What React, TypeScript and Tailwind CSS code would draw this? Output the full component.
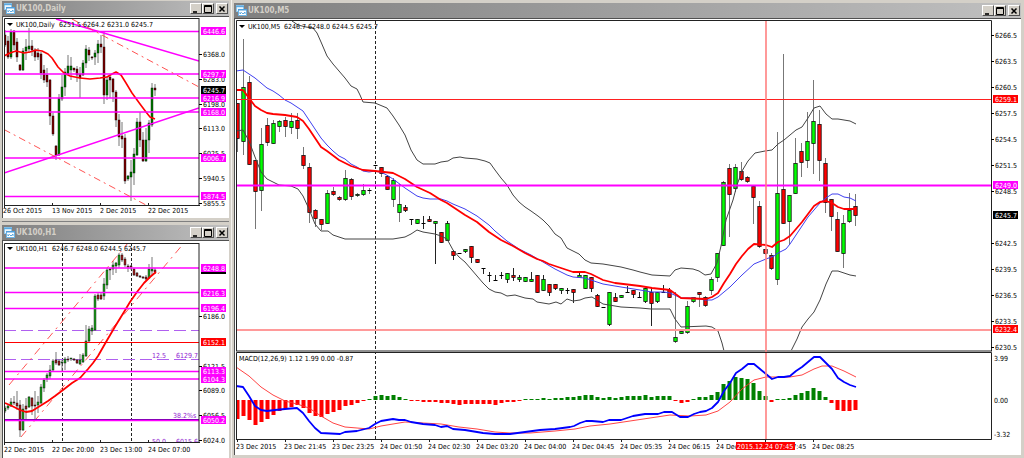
import type { ReactNode } from 'react';

// [high, body top, body bottom, low, direction], all in chart units. 'd' is a doji.
type Bar = [number, number, number, number, 'u' | 'r' | 'd'];
type Point = [number, number];
type Tone = 'plain' | 'magenta' | 'red' | 'black';

const M5_BARS: Bar[] = [
  [103, 103, 138, 151, 'r'], [39, 87, 141, 154, 'u'], [76, 82, 164, 164, 'r'], [160, 160, 191, 228, 'r'],
  [128, 144, 190, 210, 'u'], [118, 125, 142, 145, 'r'], [120, 123, 143, 143, 'u'], [120, 121, 126, 131, 'u'],
  [117, 120, 126, 136, 'r'], [113, 121, 127, 133, 'u'], [113, 120, 128, 138, 'r'], [147, 155, 165, 168, 'r'],
  [163, 167, 212, 222, 'r'], [209, 210, 218, 226, 'r'], [219, 219, 224, 229, 'r'], [190, 193, 223, 223, 'u'],
  [187, 191, 194, 195, 'r'], [196, 197, 199, 200, 'r'], [170, 178, 199, 200, 'u'], [178, 179, 196, 199, 'r'],
  [193, 194, 195, 196, 'u'], [184, 190, 194, 195, 'u'], [188, 190, 190, 193, 'd'], [165, 165, 165, 166, 'd'],
  [167, 167, 173, 176, 'r'], [175, 176, 189, 189, 'r'], [178, 180, 199, 206, 'u'], [184, 204, 212, 221, 'u'],
  [205, 207, 210, 211, 'r'], [219, 219, 219, 224, 'd'], [219, 219, 223, 223, 'u'], [216, 223, 223, 228, 'd'],
  [216, 219, 221, 221, 'r'], [221, 221, 223, 263, 'u'], [232, 232, 242, 242, 'r'], [221, 223, 240, 240, 'u'],
  [250, 251, 255, 259, 'r'], [253, 253, 253, 253, 'd'], [249, 249, 251, 252, 'u'], [246, 246, 257, 262, 'r'],
  [259, 259, 262, 262, 'r'], [268, 268, 268, 273, 'd'], [272, 275, 275, 281, 'd'], [275, 280, 280, 280, 'd'],
  [272, 275, 275, 278, 'd'], [273, 273, 279, 282, 'u'], [268, 275, 277, 280, 'r'], [275, 277, 279, 281, 'u'],
  [277, 277, 281, 281, 'u'], [272, 279, 281, 281, 'u'], [275, 275, 292, 292, 'r'], [275, 279, 290, 290, 'u'],
  [284, 284, 292, 295, 'r'], [284, 284, 288, 289, 'r'], [288, 288, 290, 293, 'u'], [288, 290, 290, 293, 'd'],
  [289, 289, 292, 302, 'r'], [272, 275, 277, 277, 'u'], [275, 275, 288, 288, 'u'], [277, 277, 288, 291, 'r'],
  [294, 295, 306, 306, 'r'], [307, 307, 307, 307, 'd'], [292, 292, 324, 325, 'u'], [293, 297, 301, 301, 'r'],
  [295, 295, 297, 297, 'u'], [286, 292, 292, 292, 'd'], [290, 290, 294, 297, 'r'], [292, 297, 297, 297, 'd'],
  [288, 288, 301, 302, 'u'], [287, 292, 303, 325, 'r'], [292, 292, 301, 302, 'u'], [285, 292, 292, 292, 'd'],
  [288, 290, 297, 297, 'r'], [292, 337, 341, 342, 'u'], [331, 331, 333, 333, 'u'], [301, 306, 332, 333, 'u'],
  [297, 297, 301, 302, 'u'], [292, 292, 294, 306, 'r'], [296, 297, 305, 306, 'r'], [277, 279, 290, 294, 'u'],
  [253, 253, 277, 281, 'u'], [181, 182, 245, 245, 'u'], [164, 168, 194, 236, 'r'], [164, 167, 188, 191, 'u'],
  [162, 171, 179, 180, 'r'], [176, 177, 181, 182, 'r'], [186, 186, 197, 223, 'r'], [201, 206, 246, 247, 'r'],
  [249, 249, 253, 254, 'r'], [253, 255, 268, 269, 'r'], [132, 193, 279, 284, 'u'], [54, 189, 223, 223, 'r'],
  [195, 195, 221, 244, 'u'], [138, 163, 193, 193, 'u'], [143, 151, 162, 176, 'r'], [112, 141, 160, 167, 'u'],
  [80, 121, 143, 173, 'u'], [110, 124, 160, 180, 'r'], [158, 163, 202, 212, 'r'], [199, 199, 216, 230, 'r'],
  [212, 219, 251, 251, 'r'], [215, 223, 253, 267, 'u'], [193, 210, 221, 222, 'u'], [194, 206, 215, 225, 'r'],
];

const DAILY_BARS: Bar[] = [
  [30, 35, 45, 47, 'r'], [36, 41, 57, 59, 'r'], [29, 32, 57, 59, 'u'], [30, 31, 45, 50, 'r'], [38, 42, 57, 62, 'r'],
  [64, 65, 70, 71, 'r'], [48, 51, 70, 71, 'u'], [39, 47, 51, 60, 'u'], [28, 46, 49, 53, 'u'], [40, 46, 50, 56, 'r'],
  [48, 50, 57, 61, 'r'], [48, 53, 57, 60, 'r'], [52, 54, 73, 79, 'r'], [65, 70, 80, 83, 'r'], [68, 75, 82, 87, 'r'],
  [79, 80, 116, 125, 'r'], [113, 116, 134, 136, 'r'], [145, 146, 155, 160, 'r'], [94, 98, 155, 156, 'u'],
  [75, 87, 99, 101, 'u'], [68, 72, 87, 96, 'u'], [55, 66, 74, 75, 'u'], [57, 66, 70, 80, 'u'], [68, 68, 70, 72, 'r'],
  [66, 69, 75, 82, 'r'], [67, 74, 78, 98, 'r'], [60, 63, 75, 76, 'u'], [45, 49, 63, 68, 'u'], [47, 50, 55, 61, 'r'],
  [56, 57, 58, 60, 'r'], [50, 53, 57, 65, 'u'], [40, 44, 53, 63, 'u'], [35, 44, 47, 53, 'r'], [31, 47, 95, 104, 'r'],
  [76, 80, 95, 100, 'u'], [76, 77, 80, 98, 'r'], [78, 79, 92, 102, 'r'], [90, 92, 120, 127, 'r'],
  [114, 120, 137, 146, 'r'], [122, 136, 139, 148, 'r'], [134, 138, 181, 184, 'r'], [175, 176, 179, 181, 'u'],
  [160, 172, 177, 201, 'u'], [148, 154, 173, 185, 'u'], [118, 122, 155, 156, 'u'], [112, 122, 140, 147, 'r'],
  [132, 140, 161, 162, 'r'], [128, 140, 161, 162, 'u'], [120, 123, 140, 153, 'u'], [83, 88, 125, 127, 'u'],
  [84, 88, 90, 96, 'r'],
];

const H1_BARS: Bar[] = [
  [406, 408, 411, 413, 'u'], [405, 406, 408, 410, 'u'], [398, 402, 406, 407, 'u'], [396, 402, 403, 405, 'r'],
  [391, 403, 406, 410, 'r'], [400, 405, 430, 437, 'r'], [404, 409, 430, 431, 'u'], [398, 406, 409, 420, 'r'],
  [396, 397, 407, 408, 'u'], [397, 398, 406, 415, 'r'], [391, 405, 406, 420, 'r'], [396, 402, 405, 413, 'u'],
  [384, 387, 403, 404, 'u'], [378, 380, 388, 392, 'u'], [373, 375, 379, 382, 'u'], [365, 370, 376, 379, 'u'],
  [359, 361, 370, 371, 'u'], [352, 360, 363, 365, 'r'], [359, 361, 365, 366, 'r'], [360, 362, 363, 371, 'u'],
  [357, 359, 363, 370, 'u'], [356, 359, 360, 362, 'r'], [358, 358, 359, 361, 'u'], [358, 359, 360, 361, 'r'],
  [359, 360, 363, 364, 'r'], [354, 360, 364, 365, 'u'], [353, 355, 362, 363, 'u'], [325, 341, 356, 357, 'u'],
  [326, 329, 341, 342, 'u'], [325, 328, 331, 335, 'u'], [294, 296, 330, 331, 'u'], [293, 295, 299, 301, 'r'],
  [292, 295, 299, 300, 'r'], [278, 284, 296, 300, 'u'], [268, 270, 285, 289, 'u'], [268, 269, 270, 280, 'r'],
  [261, 265, 269, 275, 'u'], [262, 263, 266, 273, 'u'], [253, 255, 265, 268, 'u'], [253, 255, 260, 262, 'r'],
  [257, 259, 265, 267, 'r'], [264, 266, 267, 272, 'r'], [265, 266, 267, 270, 'r'], [268, 269, 275, 276, 'r'],
  [272, 273, 276, 277, 'r'], [275, 276, 277, 278, 'r'], [276, 277, 278, 279, 'r'], [275, 277, 279, 280, 'r'],
  [264, 269, 278, 279, 'u'], [257, 269, 271, 275, 'u'], [268, 270, 272, 274, 'r'],
];

const MACD_BARS = [
  -19, -16, -20, -25, -22, -19, -15, -11, -9, -7, -5, -8, -13, -16, -17, -14, -12, -10, -6, -5, -3, -1, 1, 4, 5, 4, 5,
  3, 1, -1, -1, -2, -2, -2, -3, -3, -4, -5, -4, -4, -4, -4, -4, -5, -3, -2, -2, -1, 1, 1, 1, 2, 1, 2, 2, 3, 3, 4, 5, 5,
  3, 2, 3, 2, 3, 4, 4, 4, 5, 3, 4, 4, 4, -1, -3, -2, 1, 3, 3, 5, 8, 16, 19, 23, 22, 21, 17, 9, 4, -2, 1, 1, 2, 5, 7,
  9, 12, 9, 3, -3, -10, -11, -11, -10,
];

const BAND_UPPER: Point[] = [
  [292, 21], [298, 25], [306, 27], [313, 28], [317, 33], [321, 42], [327, 56], [333, 64], [339, 71], [345, 78],
  [351, 86], [357, 89], [360, 95], [363, 102], [375, 103], [387, 108], [393, 116], [399, 125], [405, 135], [411, 150],
  [417, 160], [423, 164], [435, 164], [441, 162], [448, 161], [453, 158], [460, 157], [465, 158], [477, 159],
  [485, 161], [490, 163], [495, 170], [501, 178], [507, 185], [513, 195], [519, 202], [525, 207], [531, 211],
  [538, 216], [543, 220], [549, 226], [555, 234], [561, 238], [567, 248], [573, 251], [579, 254], [585, 260],
  [591, 263], [603, 264], [621, 267], [633, 270], [640, 272], [652, 275], [670, 276], [675, 270], [681, 268],
  [693, 269], [699, 271], [705, 275], [711, 274], [717, 263], [721, 246], [726, 220], [733, 200], [737, 185],
  [742, 171], [748, 161], [755, 153], [765, 151], [772, 150], [778, 144], [784, 140], [790, 135], [796, 130],
  [802, 127], [808, 118], [814, 108], [820, 106], [826, 114], [832, 119], [838, 119], [850, 121], [856, 124],
];

const BAND_LOWER: Point[] = [
  [236, 131], [243, 130], [249, 141], [255, 157], [261, 172], [267, 179], [273, 182], [279, 185], [291, 186],
  [298, 189], [303, 196], [309, 209], [315, 224], [321, 231], [328, 231], [333, 235], [345, 239], [393, 239],
  [405, 237], [411, 234], [417, 230], [423, 232], [435, 234], [441, 236], [447, 239], [453, 250], [459, 257],
  [465, 262], [471, 269], [477, 276], [483, 283], [489, 289], [495, 292], [501, 293], [507, 296], [515, 295],
  [525, 298], [533, 299], [537, 302], [549, 304], [556, 302], [561, 304], [567, 299], [573, 301], [580, 300],
  [585, 298], [592, 297], [603, 304], [615, 306], [621, 307], [640, 308], [651, 309], [670, 309], [675, 319],
  [681, 327], [706, 326], [712, 327], [718, 331], [722, 343], [724, 351], [791, 351], [797, 339], [802, 327],
  [808, 319], [814, 312], [820, 300], [826, 284], [832, 271], [838, 271], [844, 273], [850, 275], [856, 276],
];
const BAND_LOWER_BREAK = 60; // the band drops out of the pane here and comes back

const SLOW_MA: Point[] = [
  [236, 71], [243, 70], [249, 74], [255, 78], [261, 83], [267, 88], [273, 91], [279, 95], [285, 100], [291, 103],
  [297, 107], [303, 111], [309, 120], [315, 129], [321, 138], [327, 145], [333, 151], [339, 156], [345, 159],
  [351, 164], [357, 167], [363, 171], [369, 172], [375, 171], [383, 173], [390, 177], [397, 182], [405, 188],
  [411, 192], [417, 196], [423, 198], [430, 199], [441, 199], [447, 201], [453, 204], [465, 209], [477, 216],
  [489, 225], [495, 231], [507, 241], [519, 249], [531, 255], [543, 262], [555, 269], [567, 275], [573, 277],
  [585, 278], [603, 284], [621, 287], [640, 290], [652, 292], [664, 292], [670, 293], [681, 298], [694, 298],
  [705, 300], [712, 300], [718, 297], [730, 287], [742, 275], [754, 264], [766, 259], [774, 256], [778, 253],
  [786, 249], [790, 244], [796, 235], [808, 217], [820, 203], [826, 198], [832, 194], [838, 194], [844, 197],
  [850, 198], [856, 201],
];

const FAST_MA: Point[] = [
  [236, 90], [243, 90], [249, 98], [255, 106], [261, 110], [267, 113], [273, 114], [285, 115], [297, 117],
  [303, 121], [309, 129], [315, 138], [321, 147], [327, 151], [339, 160], [351, 166], [363, 170], [375, 171],
  [393, 173], [405, 179], [417, 187], [430, 193], [441, 200], [447, 203], [453, 207], [465, 215], [477, 222],
  [489, 232], [501, 240], [513, 246], [525, 253], [537, 259], [543, 261], [549, 264], [561, 268], [573, 272],
  [585, 272], [591, 274], [603, 280], [615, 283], [640, 286], [652, 288], [670, 290], [681, 298], [706, 299],
  [712, 297], [718, 293], [724, 283], [730, 274], [736, 264], [742, 256], [748, 249], [754, 244], [766, 245],
  [772, 247], [778, 242], [784, 240], [790, 236], [796, 229], [802, 222], [808, 214], [814, 206], [820, 202],
  [826, 201], [832, 203], [838, 207], [844, 209], [856, 209],
];

const MACD_LINE: Point[] = [
  [236, 386], [243, 387], [249, 396], [255, 406], [261, 410], [267, 411], [275, 410], [285, 409], [297, 408],
  [303, 413], [309, 421], [315, 428], [321, 433], [340, 434], [345, 432], [357, 431], [369, 428], [375, 424],
  [381, 421], [393, 419], [399, 420], [405, 420], [411, 422], [423, 424], [435, 425], [441, 427], [447, 426],
  [453, 429], [465, 430], [477, 432], [483, 433], [495, 434], [510, 434], [525, 432], [540, 430], [555, 429],
  [570, 427], [574, 426], [580, 423], [586, 421], [592, 421], [603, 422], [609, 420], [621, 420], [633, 416],
  [645, 414], [658, 414], [664, 412], [672, 412], [680, 417], [688, 417], [694, 414], [700, 412], [706, 411],
  [712, 408], [718, 402], [724, 391], [730, 383], [736, 373], [742, 369], [748, 364], [754, 364], [760, 369],
  [766, 374], [772, 379], [778, 377], [784, 377], [790, 376], [796, 371], [802, 367], [808, 362], [814, 357],
  [820, 357], [826, 363], [832, 369], [838, 378], [844, 382], [850, 385], [856, 387],
];

const MACD_SIGNAL: Point[] = [
  [236, 367], [249, 376], [261, 387], [273, 395], [285, 401], [297, 404], [309, 408], [321, 416], [333, 423],
  [345, 427], [357, 428], [369, 429], [381, 426], [393, 424], [405, 422], [423, 423], [441, 424], [459, 427],
  [477, 429], [495, 432], [510, 433], [530, 433], [555, 431], [575, 429], [590, 426], [610, 424], [630, 421],
  [650, 418], [670, 415], [690, 416], [706, 415], [718, 411], [730, 402], [742, 389], [754, 380], [766, 377],
  [790, 377], [802, 375], [814, 369], [822, 366], [832, 366], [844, 371], [856, 377],
];

const DAILY_MA: Point[] = [
  [4, 56], [10, 53], [16, 51], [24, 53], [30, 52], [36, 50], [42, 51], [48, 54], [52, 58], [58, 67], [64, 73],
  [70, 76], [80, 78], [90, 79], [100, 78], [107, 77], [112, 74], [116, 72], [121, 75], [126, 83], [132, 93],
  [140, 104], [146, 112], [150, 117], [155, 119],
];

const H1_MA: Point[] = [
  [5, 403], [12, 406], [20, 410], [26, 412], [32, 411], [40, 406], [48, 401], [55, 396], [63, 390], [72, 383],
  [80, 378], [88, 369], [93, 363], [98, 356], [106, 342], [116, 325], [124, 312], [130, 302], [137, 292],
  [144, 283], [150, 277], [156, 272],
];

const M5_DATES = [
  '23 Dec 2015', '23 Dec 21:45', '23 Dec 23:25', '24 Dec 01:50', '24 Dec 02:30', '24 Dec 03:20', '24 Dec 04:00',
  '24 Dec 04:45', '24 Dec 05:35', '24 Dec 06:15', '24 Dec 07:05', '24 Dec 07:45', '24 Dec 08:25',
];

const toneFill: Record<Tone, string> = { plain: 'none', magenta: '#ff00ff', red: '#ff0000', black: '#000000' };

function Line({ points, color, width = 1 }: { points: Point[]; color: string; width?: number }) {
  return (
    <polyline
      points={points.map((p) => p.join(',')).join(' ')}
      fill="none"
      stroke={color}
      strokeWidth={width}
      strokeLinejoin="round"
    />
  );
}

function Level({ y, x1, x2, color = '#ff00ff', width = 2 }: { y: number; x1: number; x2: number; color?: string; width?: number }) {
  return <path d={`M${x1} ${y}H${x2}`} stroke={color} strokeWidth={width} />;
}

function Label({ x, y, children, fill = '#000' }: { x: number; y: number; children: ReactNode; fill?: string }) {
  return (
    <text x={x} y={y} fill={fill} className="text-[7px]">
      {children}
    </text>
  );
}

function Price({ x, y, tone = 'plain', children }: { x: number; y: number; tone?: Tone; children: string }) {
  return (
    <g>
      {tone === 'plain' ? (
        <path d={`M${x - 4} ${y + 0.5}h3`} stroke="#000" />
      ) : (
        <rect x={x - 2} y={y - 4} width="25" height="8" fill={toneFill[tone]} />
      )}
      <Label x={x} y={y + 3} fill={tone === 'plain' ? '#000' : '#fff'}>
        {children}
      </Label>
    </g>
  );
}

function SmallCandles({ bars, green, red }: { bars: Bar[]; green: string; red: string }) {
  return (
    <g>
      {bars.map(([high, top, bottom, low, dir], i) => {
        const x = 5 + i * 3;
        return (
          <g key={i}>
            <path d={`M${x} ${high}V${low}`} stroke="#777" />
            <rect x={x - 1} y={top} width="2" height={Math.max(bottom - top, 1)} fill={dir === 'u' ? green : red} stroke="#000" strokeWidth="0.4" />
          </g>
        );
      })}
    </g>
  );
}

function M5Candles() {
  return (
    <g>
      {M5_BARS.map(([high, top, bottom, low, dir], i) => {
        const x = 237.5 + i * 6;
        const wick = i < 28 || i > 72 ? '#777' : '#222';
        return (
          <g key={i}>
            <path d={`M${x} ${high}V${low + 1}`} stroke={wick} />
            {dir === 'd' ? (
              <path d={`M${x - 2} ${top + 0.5}h4`} stroke="#000" />
            ) : (
              <rect
                x={x - 1.7}
                y={top + 0.5}
                width="3.4"
                height={bottom - top}
                fill={dir === 'u' ? '#00ff00' : '#ff0000'}
                stroke="#111"
                strokeWidth="0.8"
              />
            )}
          </g>
        );
      })}
    </g>
  );
}

function Heading({ x, y, symbol, quotes, gap }: { x: number; y: number; symbol: string; quotes: string; gap: number }) {
  return (
    <g>
      <path d={`M${x} ${y - 4}h6l-3 3z`} fill="#000" />
      <Label x={x + 9} y={y}>{symbol}</Label>
      <Label x={x + gap} y={y}>{quotes}</Label>
    </g>
  );
}

function DailyChart() {
  return (
    <svg viewBox="3 17 226 201" className="block h-auto w-full" role="img" aria-label="UK100 daily chart">
      <clipPath id="daily">
        <path d="M4 18H199V205H4z" />
      </clipPath>
      <g clipPath="url(#daily)">
        <SmallCandles bars={DAILY_BARS} green="#008000" red="#800000" />
        <Line points={DAILY_MA} color="#ff0000" width={1.6} />
        {[31.5, 74, 98, 112, 158, 196.5].map((y) => (
          <Level key={y} y={y} x1={4} x2={199} width={1.6} />
        ))}
        <path d="M56 19L199 61M4 173L199 108" stroke="#ff00ff" strokeWidth="1.6" />
        <path d="M72 19L199 87M4 129.5L146 205" stroke="#ff4040" strokeWidth="0.9" strokeDasharray="7 4 2 4" />
      </g>
      <path d="M4.5 205V18.5H199M199 18V206M4 205.5H200" fill="none" stroke="#222" />
      <path d="M4.5 206v2M52.5 203v2M100.5 203v2M148.5 203v2" stroke="#222" />
      <Heading x={7} y={27} symbol="UK100,Daily" quotes="6251.5 6264.2 6231.0 6245.7" gap={52} />
      <Price x={203} y={54}>6368.0</Price>
      <Price x={203} y={79}>6283.0</Price>
      <Price x={203} y={104}>6198.0</Price>
      <Price x={203} y={128}>6113.0</Price>
      <Price x={203} y={153}>6025.5</Price>
      <Price x={203} y={178}>5940.5</Price>
      <Price x={203} y={203}>5855.5</Price>
      <Price x={203} y={31} tone="magenta">6446.6</Price>
      <Price x={203} y={74} tone="magenta">6297.7</Price>
      <Price x={203} y={98} tone="magenta">6216.9</Price>
      <Price x={203} y={90} tone="black">6245.7</Price>
      <Price x={203} y={112} tone="magenta">6168.0</Price>
      <Price x={203} y={158} tone="magenta">6006.7</Price>
      <Price x={203} y={196} tone="magenta">5874.5</Price>
      <Label x={3} y={213}>26 Oct 2015</Label>
      <Label x={52} y={213}>13 Nov 2015</Label>
      <Label x={100} y={213}>2 Dec 2015</Label>
      <Label x={148} y={213}>22 Dec 2015</Label>
    </svg>
  );
}

function HourlyChart() {
  return (
    <svg viewBox="3 241 226 217" className="block h-auto w-full" role="img" aria-label="UK100 hourly chart">
      <clipPath id="hourly">
        <path d="M4 243H199V442H4z" />
      </clipPath>
      <g clipPath="url(#hourly)">
        <path d="M62.5 243V442M131.5 243V442" stroke="#222" strokeDasharray="3 2" />
        <path d="M4 330.5H199M4 359.5H199" stroke="#b060f0" strokeDasharray="12 5" />
        <SmallCandles bars={H1_BARS} green="#20a020" red="#a02020" />
        <path d="M9 385L128 243M21 437L184 243" stroke="#ff4040" strokeWidth="0.9" strokeDasharray="8 5 2 5" />
        <Line points={H1_MA} color="#ff0000" width={1.8} />
        {[268, 292.5, 308.5, 371.5, 379].map((y) => (
          <Level key={y} y={y} x1={4} x2={199} width={1.6} />
        ))}
        <Level y={419.5} x1={4} x2={199} color="#6000a0" width={1} />
        <Level y={420.5} x1={4} x2={199} width={1.4} />
        <Level y={342.5} x1={4} x2={199} color="#ff0000" width={1} />
        <Label x={152} y={358} fill="#9020d0">12.5</Label>
        <Label x={176} y={358} fill="#9020d0">6129.7</Label>
        <Label x={173} y={418} fill="#9020d0">38.2%s</Label>
        <Label x={152} y={444} fill="#9020d0">50.0</Label>
        <Label x={176} y={444} fill="#9020d0">6015.6</Label>
      </g>
      <path d="M4.5 442V243.5H199M199 243V443M4 442.5H200" fill="none" stroke="#222" />
      <path d="M4.5 443v2M52.5 440v2M100.5 440v2M148.5 440v2" stroke="#222" />
      <Heading x={7} y={251} symbol="UK100,H1" quotes="6246.7 6248.0 6244.5 6245.7" gap={45} />
      <Price x={203} y={316}>6186.0</Price>
      <Price x={203} y={366}>6121.5</Price>
      <Price x={203} y={390}>6089.0</Price>
      <Price x={203} y={415}>6056.5</Price>
      <Price x={203} y={440}>6024.0</Price>
      <rect x="201" y="266" width="25" height="8" fill="#000" />
      <Price x={203} y={268} tone="magenta">6248.8</Price>
      <Price x={203} y={293} tone="magenta">6216.3</Price>
      <Price x={203} y={308} tone="magenta">6196.4</Price>
      <Price x={203} y={342} tone="red">6152.1</Price>
      <Price x={203} y={371} tone="magenta">6113.3</Price>
      <Price x={203} y={379} tone="magenta">6104.3</Price>
      <Price x={203} y={420} tone="magenta">6050.2</Price>
      <Label x={4} y={452}>22 Dec 2015</Label>
      <Label x={52} y={452}>22 Dec 20:00</Label>
      <Label x={100} y={452}>23 Dec 13:00</Label>
      <Label x={148} y={452}>24 Dec 07:00</Label>
    </svg>
  );
}

function FiveMinuteChart() {
  const prices = Array.from({ length: 13 }, (_, i) => i).filter((i) => i !== 7);
  return (
    <svg viewBox="235 19 786 436" className="block h-auto w-full" role="img" aria-label="UK100 five minute chart with MACD">
      <clipPath id="m5">
        <path d="M236 20H992V439H236z" />
      </clipPath>
      <g clipPath="url(#m5)">
        <path d="M375.5 21V439" stroke="#222" strokeDasharray="3 2" />
        <M5Candles />
        <Line points={BAND_UPPER} color="#444" />
        <Line points={BAND_LOWER.slice(0, BAND_LOWER_BREAK)} color="#444" />
        <Line points={BAND_LOWER.slice(BAND_LOWER_BREAK)} color="#444" />
        <Line points={SLOW_MA} color="#4040f0" />
        <Line points={FAST_MA} color="#ff0000" width={1.8} />
        <Level y={99.5} x1={236} x2={991} color="#ff2020" width={1.2} />
        <Level y={185.5} x1={236} x2={991} width={1.8} />
        <Level y={330} x1={236} x2={991} color="#ff9a9a" />

        {MACD_BARS.map((v, i) => (
          <rect
            key={i}
            x={235.5 + i * 6}
            y={v > 0 ? 400 - v : 400}
            width="4"
            height={Math.abs(v)}
            fill={v > 0 ? '#008000' : '#ff0000'}
          />
        ))}
        <Line points={MACD_SIGNAL} color="#ff3030" width={0.9} />
        <Line points={MACD_LINE} color="#0000ff" width={1.8} />
        <path d="M236 351H992" stroke="#909090" strokeWidth="2" />
        <path d="M766 21V439" stroke="#ff8080" strokeWidth="1.6" />
      </g>
      <path d="M236.5 351V20.5H991.5V351" fill="none" stroke="#222" />
      <path d="M236.5 439V352.5H991.5V439.5H236" fill="none" stroke="#222" />
      <Heading x={239} y={29} symbol="UK100,M5" quotes="6246.7 6248.0 6244.5 6245.7" gap={45} />
      <Label x={239} y={361}>MACD(12,26,9) 1.12 1.99 0.00 -0.87</Label>

      {prices.map((i) => (
        <Price key={i} x={995} y={35 + i * 26}>
          {(6266.5 - i * 3).toFixed(1)}
        </Price>
      ))}
      <Price x={995} y={99} tone="red">6259.1</Price>
      <Price x={995} y={185} tone="magenta">6249.0</Price>
      <Price x={995} y={215} tone="black">6245.7</Price>
      <Price x={995} y={329} tone="red">6232.4</Price>
      <Label x={994} y={361}>3.99</Label>
      <Label x={994} y={403}>0.00</Label>
      <Label x={994} y={437}>-3.32</Label>

      {M5_DATES.map((date, i) => (
        <g key={date}>
          <path d={`M${237.5 + i * 48} 440v2`} stroke="#222" />
          <Label x={236 + i * 48} y={449}>{date}</Label>
        </g>
      ))}
      <rect x="736" y="442" width="59" height="8" fill="#ff0000" />
      <Label x={737} y={449} fill="#fff">2015.12.24 07:45</Label>
    </svg>
  );
}

function WindowIcon() {
  return (
    <svg viewBox="0 0 11 11" className="size-[11px] shrink-0" aria-hidden="true">
      <rect x="0.5" y="0.5" width="7" height="6" fill="#eef7fd" stroke="#8cc4ea" />
      <path d="M0 1.5h8" stroke="#5aa9e0" strokeWidth="1.4" />
      <rect x="2.5" y="4.5" width="8" height="6" fill="#ffffff" stroke="#6fb4e4" />
      <path d="M2 4.8h9" stroke="#4c9fdc" strokeWidth="1.4" />
      <path d="M4 7v2l1.500-1.500 1.500 1.500 2-2v2" fill="none" stroke="#4c9fdc" strokeWidth="0.9" />
    </svg>
  );
}

const windowButton =
  'flex h-[11px] w-3 items-center justify-center border border-t-white border-l-white border-r-[#505050] border-b-[#505050] bg-[#d4d0c8]';

function ChartWindow({ title, children }: { title: string; children: ReactNode }) {
  return (
    <section>
      <header className="flex h-[15px] items-center bg-linear-to-r from-[#808080] to-[#c0c0c0] pr-px pl-[2px]">
        <WindowIcon />
        <h2 className="ml-px flex-1 text-[8px] leading-3 font-bold text-[#d4d0c8]">{title}</h2>
        <button type="button" aria-label="Minimize" className={windowButton}>
          <svg viewBox="0 0 8 8" className="size-2">
            <path d="M1 7h4" stroke="#000" strokeWidth="1.6" />
          </svg>
        </button>
        <button type="button" aria-label="Maximize" className={windowButton}>
          <svg viewBox="0 0 8 8" className="size-2">
            <path d="M0.500 0.500h7v7h-7zM0 1.500h8" fill="none" stroke="#000" />
          </svg>
        </button>
        <button type="button" aria-label="Close" className={`${windowButton} ml-[2px]`}>
          <svg viewBox="0 0 8 8" className="size-2">
            <path d="M1.500 1.500l5 5M6.500 1.500l-5 5" stroke="#000" strokeWidth="1.5" />
          </svg>
        </button>
      </header>
      <div className="border-t border-l border-[#505050] bg-white">{children}</div>
    </section>
  );
}

export default function App() {
  return (
    <main className="flex min-h-screen items-start bg-[#d4d0c8] font-['DejaVu_Sans_Condensed','DejaVu_Sans',sans-serif]">
      <div className="w-[231px] shrink-0 border-r-2 border-[#d4d0c8] pt-px pl-[2px]">
        <ChartWindow title="UK100,Daily">
          <DailyChart />
        </ChartWindow>
        <div className="mt-[3px] border-t border-[#808080] pt-[3px]">
          <ChartWindow title="UK100,H1">
            <HourlyChart />
          </ChartWindow>
        </div>
      </div>
      <div className="min-w-0 flex-1 border-l border-[#f4f2ee] pt-[3px] pr-[3px] pb-[3px] pl-[2px]">
        <ChartWindow title="UK100,M5">
          <FiveMinuteChart />
        </ChartWindow>
      </div>
    </main>
  );
}
